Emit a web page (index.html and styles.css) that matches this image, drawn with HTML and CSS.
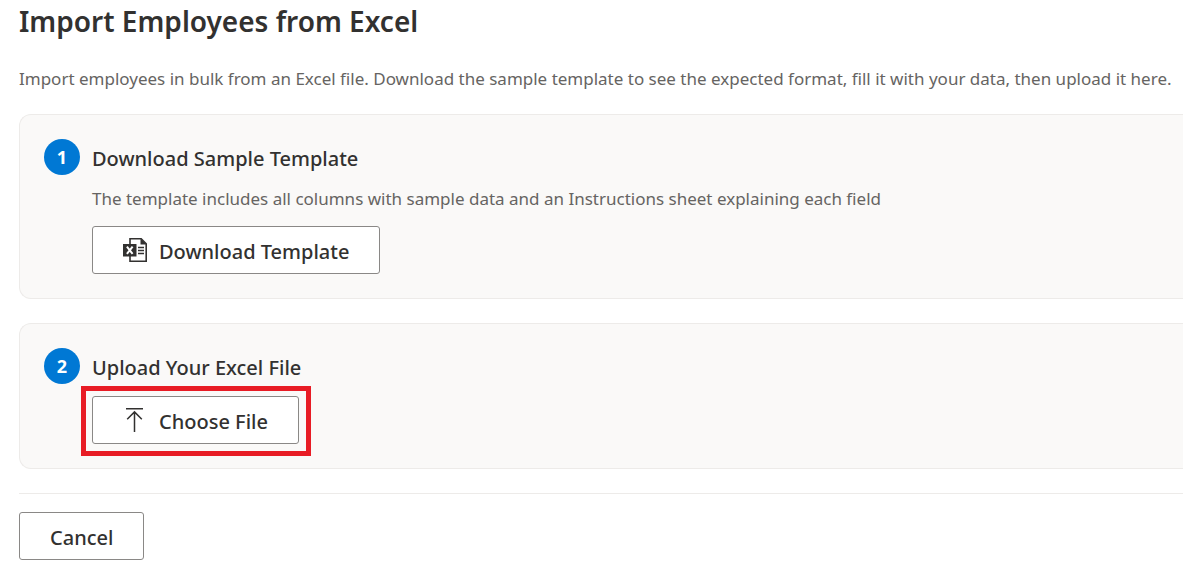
FILE: index.html
```html
<!DOCTYPE html>
<html lang="en">
<head>
<meta charset="utf-8">
<title>Import Employees from Excel</title>
<link rel="stylesheet" href="styles.css">
</head>
<body>
<main class="page">
  <h1 class="page-title">Import Employees from Excel</h1>
  <p class="intro">Import employees in bulk from an Excel file. Download the sample template to see the expected format, fill it with your data, then upload it here.</p>

  <section class="card">
    <span class="step">1</span>
    <div class="card-body">
      <h2 class="card-title">Download Sample Template</h2>
      <p class="hint">The template includes all columns with sample data and an Instructions sheet explaining each field</p>
      <button class="button" type="button">
        <svg class="icon" viewBox="0 0 24 24" aria-hidden="true">
          <path d="M7 6V.8h11.200l5 5V23.200H7V18" fill="none" stroke="#323130" stroke-width="1.600"/>
          <path d="M17.500 .5v6h6z" fill="#323130"/>
          <path d="M0 6h13.500v12.500H0z" fill="#323130"/>
          <path d="M3.900 8.600l5.700 7.300M9.600 8.600l-5.700 7.300" stroke="#fff" stroke-width="2"/>
          <path d="M15 9.500h6M15 12.500h6M15 15.500h6" stroke="#323130" stroke-width="1.400"/>
        </svg>
        <span class="label">Download Template</span>
      </button>
    </div>
  </section>

  <section class="card">
    <span class="step">2</span>
    <div class="card-body">
      <h2 class="card-title">Upload Your Excel File</h2>
      <button class="button highlighted" type="button">
        <svg class="icon" viewBox="0 0 24 24" aria-hidden="true">
          <path d="M3 .8h17M11.500 24V4M4.200 11.200l7.300-7.300 7.300 7.300" fill="none" stroke="#323130" stroke-width="1.500"/>
        </svg>
        <span class="label">Choose File</span>
      </button>
    </div>
  </section>

  <footer class="actions">
    <button class="button" type="button"><span class="label">Cancel</span></button>
  </footer>
</main>
</body>
</html>
```
FILE: styles.css
```css
* {
  box-sizing: border-box;
}

body {
  margin: 0;
  background: #fff;
  color: #323130;
  font-family: "Segoe UI", "Noto Sans", "Open Sans", sans-serif;
}

.page {
  padding: 1px 0 7px 19px;
}

.page-title {
  margin: 0 0 26px;
  font-size: 28px;
  line-height: 40px;
  font-weight: 600;
}

.intro,
.hint {
  margin: 0;
  color: #666462;
  font-size: 17px;
  line-height: 24px;
}

.card {
  display: flex;
  gap: 12px;
  margin-top: 24px;
  padding: 24px;
  border: 1px solid #edebe9;
  border-right: 0;
  border-radius: 12px 0 0 12px;
  background: #faf9f8;
}

.intro + .card {
  margin-top: 23px;
}

.step {
  display: flex;
  flex: none;
  align-items: center;
  justify-content: center;
  width: 36px;
  height: 36px;
  border-radius: 50%;
  background: #0078d4;
  color: #fff;
  font-size: 18px;
  font-weight: 700;
}

.card-title {
  margin: 5px 0 14px;
  font-size: 20px;
  line-height: 29px;
  font-weight: 500;
}

.hint {
  margin-bottom: 15px;
}

.button {
  display: inline-flex;
  align-items: center;
  gap: 12px;
  height: 48px;
  padding: 0 30px;
  border: 1px solid #8a8886;
  border-radius: 3px;
  background: #fff;
  color: #323130;
  font-family: inherit;
  font-size: 20px;
  line-height: 28px;
  font-weight: 500;
}

.label {
  padding-top: 3px;
}

.icon {
  flex: none;
  width: 24px;
  height: 24px;
}

.highlighted {
  position: relative;
}

.highlighted::after {
  content: "";
  position: absolute;
  inset: -11px -13px -13px -12px;
  border: 5px solid #e81c25;
}

.actions {
  margin-top: 24px;
  padding-top: 18px;
  border-top: 1px solid #edebe9;
}
```
